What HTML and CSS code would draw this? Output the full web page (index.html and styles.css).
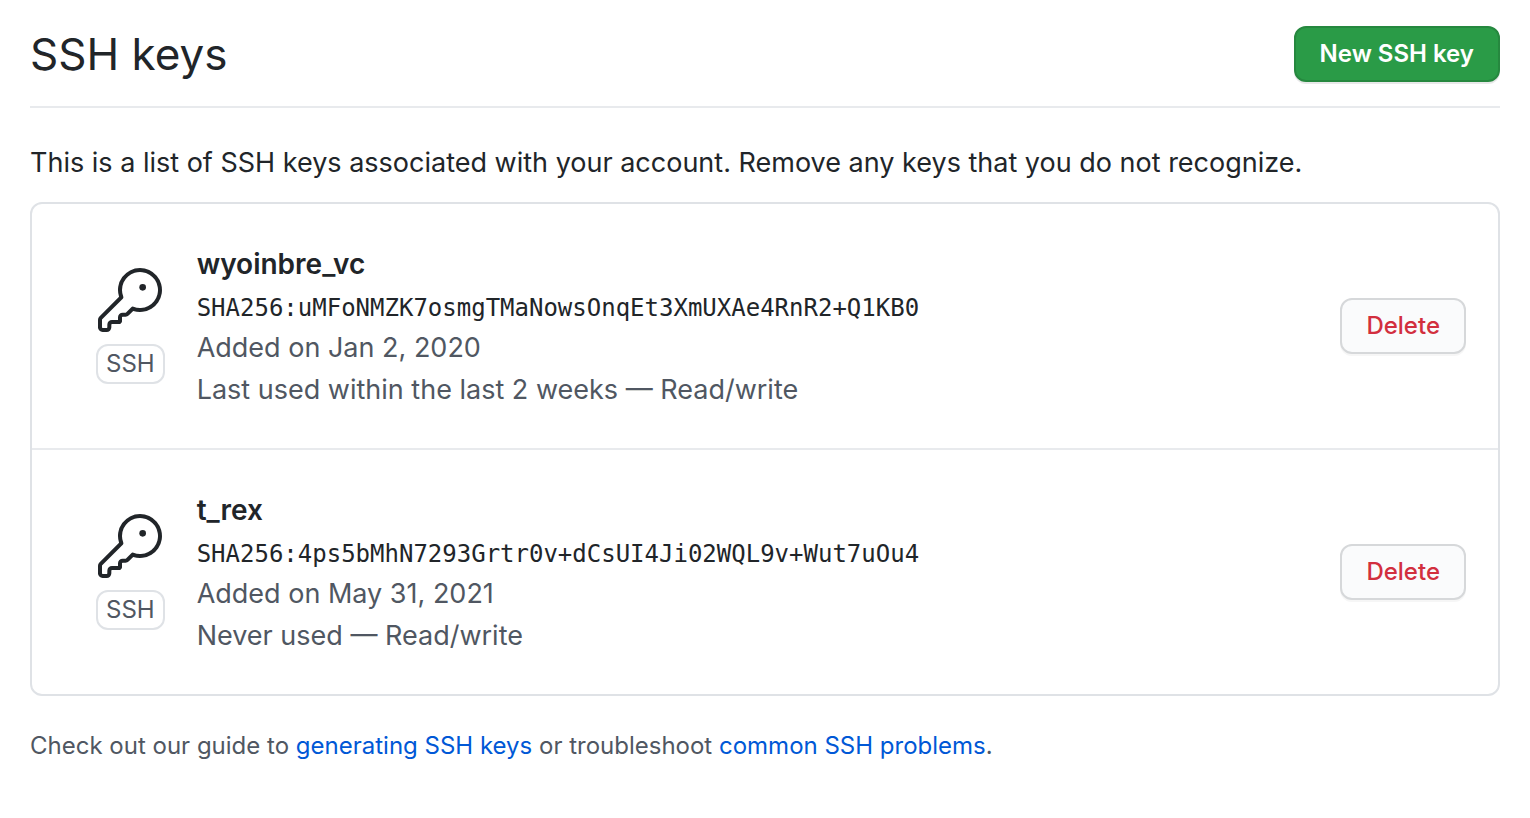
FILE: index.html
```html
<!DOCTYPE html>
<html lang="en">
<head>
<meta charset="utf-8">
<meta name="viewport" content="width=device-width, initial-scale=1">
<title>SSH keys</title>
<link rel="stylesheet" href="styles.css">
</head>
<body>
<main class="page">
  <header class="page-header">
    <h1 class="page-title">SSH keys</h1>
    <button class="btn btn-primary" type="button">New SSH key</button>
  </header>
  <p class="intro">This is a list of SSH keys associated with your account. Remove any keys that you do not recognize.</p>
  <ul class="key-list">
    <li class="key-row">
      <div class="key-type">
        <svg class="key-icon" viewBox="0 0 24 24" aria-hidden="true"><path d="M16.75 8.5a1.25 1.25 0 100-2.5 1.25 1.25 0 000 2.5z"/><path fill-rule="evenodd" d="M15.75 0a8.25 8.25 0 00-7.851 10.79L.513 18.178A1.75 1.75 0 000 19.414v2.836C0 23.217.784 24 1.75 24h1.5A1.75 1.75 0 005 22.25v-1a.25.25 0 01.25-.25h2.735a.75.75 0 00.545-.22l.214-.213A.875.875 0 009 19.948V18.5a.25.25 0 01.25-.25h1.086c.464 0 .91-.184 1.237-.513l1.636-1.636A8.25 8.25 0 1015.75 0zM9 8.25a6.75 6.75 0 114.288 6.287.75.75 0 00-.804.168l-1.971 1.972a.25.25 0 01-.177.073H9.25A1.75 1.75 0 007.5 18.5v1H5.25a1.75 1.75 0 00-1.75 1.75v1a.25.25 0 01-.25.25h-1.5a.25.25 0 01-.25-.25v-2.836a.25.25 0 01.073-.177l7.722-7.721a.75.75 0 00.168-.804A6.73 6.73 0 019 8.25z"/></svg>
        <span class="key-label">SSH</span>
      </div>
      <div class="key-info">
        <strong class="key-name">wyoinbre_vc</strong>
        <code class="key-hash">SHA256:uMFoNMZK7osmgTMaNowsOnqEt3XmUXAe4RnR2+Q1KB0</code>
        <span class="key-meta">Added on Jan 2, 2020</span>
        <span class="key-meta">Last used within the last 2 weeks — Read/write</span>
      </div>
      <button class="btn btn-danger" type="button" aria-label="Delete wyoinbre_vc">Delete</button>
    </li>
    <li class="key-row">
      <div class="key-type">
        <svg class="key-icon" viewBox="0 0 24 24" aria-hidden="true"><path d="M16.75 8.5a1.25 1.25 0 100-2.5 1.25 1.25 0 000 2.5z"/><path fill-rule="evenodd" d="M15.75 0a8.25 8.25 0 00-7.851 10.79L.513 18.178A1.75 1.75 0 000 19.414v2.836C0 23.217.784 24 1.75 24h1.5A1.75 1.75 0 005 22.25v-1a.25.25 0 01.25-.25h2.735a.75.75 0 00.545-.22l.214-.213A.875.875 0 009 19.948V18.5a.25.25 0 01.25-.25h1.086c.464 0 .91-.184 1.237-.513l1.636-1.636A8.25 8.25 0 1015.75 0zM9 8.25a6.75 6.75 0 114.288 6.287.75.75 0 00-.804.168l-1.971 1.972a.25.25 0 01-.177.073H9.25A1.75 1.75 0 007.5 18.5v1H5.25a1.75 1.75 0 00-1.75 1.75v1a.25.25 0 01-.25.25h-1.5a.25.25 0 01-.25-.25v-2.836a.25.25 0 01.073-.177l7.722-7.721a.75.75 0 00.168-.804A6.73 6.73 0 019 8.25z"/></svg>
        <span class="key-label">SSH</span>
      </div>
      <div class="key-info">
        <strong class="key-name">t_rex</strong>
        <code class="key-hash">SHA256:4ps5bMhN7293Grtr0v+dCsUI4Ji02WQL9v+Wut7uOu4</code>
        <span class="key-meta">Added on May 31, 2021</span>
        <span class="key-meta">Never used — Read/write</span>
      </div>
      <button class="btn btn-danger" type="button" aria-label="Delete t_rex">Delete</button>
    </li>
  </ul>
  <p class="help">Check out our guide to <a href="#generate">generating SSH keys</a> or troubleshoot <a href="#problems">common SSH problems</a>.</p>
</main>
</body>
</html>
```

FILE: styles.css
```css
* { box-sizing: border-box; }
body {
  margin: 0;
  background: #fff;
  color: #212529;
  font-family: Inter, "Liberation Sans", sans-serif;
  font-size: 27px;
  line-height: 42px;
}
.page { padding: 20px 30px; }
.page-header {
  display: flex;
  align-items: center;
  justify-content: space-between;
  padding: 6px 0 24px;
  border-bottom: 2px solid #e8eaed;
}
.page-title { margin: 0; font-size: 44px; font-weight: 400; line-height: 56px; }
.btn {
  height: 56px;
  padding: 0 24px;
  border: 2px solid;
  border-radius: 12px;
  font-family: inherit;
  font-size: 24px;
  font-weight: 500;
  line-height: 40px;
  cursor: pointer;
}
.btn-primary {
  border-color: #26883f;
  background: #2a9b47;
  color: #fff;
  font-weight: 600;
  box-shadow: 0 2px 0 rgba(27, 31, 35, 0.1);
}
.btn-danger {
  border-color: #d6d8da;
  background: #fafbfc;
  color: #d22f3e;
  box-shadow: 0 2px 0 rgba(27, 31, 35, 0.04);
}
.intro { margin: 34px 0 18px; }
.key-list {
  margin: 0;
  padding: 0;
  border: 2px solid #dfe2e6;
  border-radius: 12px;
  list-style: none;
}
.key-row { display: flex; align-items: center; padding: 36px 32px; }
.key-row + .key-row { border-top: 2px solid #e8eaed; }
.key-type {
  display: flex;
  flex-direction: column;
  align-items: center;
  gap: 12px;
  margin: 0 32px;
}
.key-icon { display: block; width: 64px; height: 64px; fill: #212529; }
.key-label {
  padding: 0 8px;
  border: 2px solid #dfe2e6;
  border-radius: 12px;
  color: #505762;
  font-size: 24px;
  line-height: 36px;
}
.key-info {
  display: flex;
  flex: 1;
  flex-direction: column;
  min-width: 0;
  padding: 3px 0 1px;
}
.key-name { font-size: 28px; font-weight: 600; }
.key-hash {
  padding-top: 4px;
  font-family: "DejaVu Sans Mono", "Liberation Mono", monospace;
  font-size: 24px;
  line-height: 38px;
  overflow-wrap: anywhere;
}
.key-meta { color: #505762; }
.help { margin: 30px 0; color: #505762; font-size: 24px; line-height: 40px; }
.help a { color: #0058d6; text-decoration: none; }
```
